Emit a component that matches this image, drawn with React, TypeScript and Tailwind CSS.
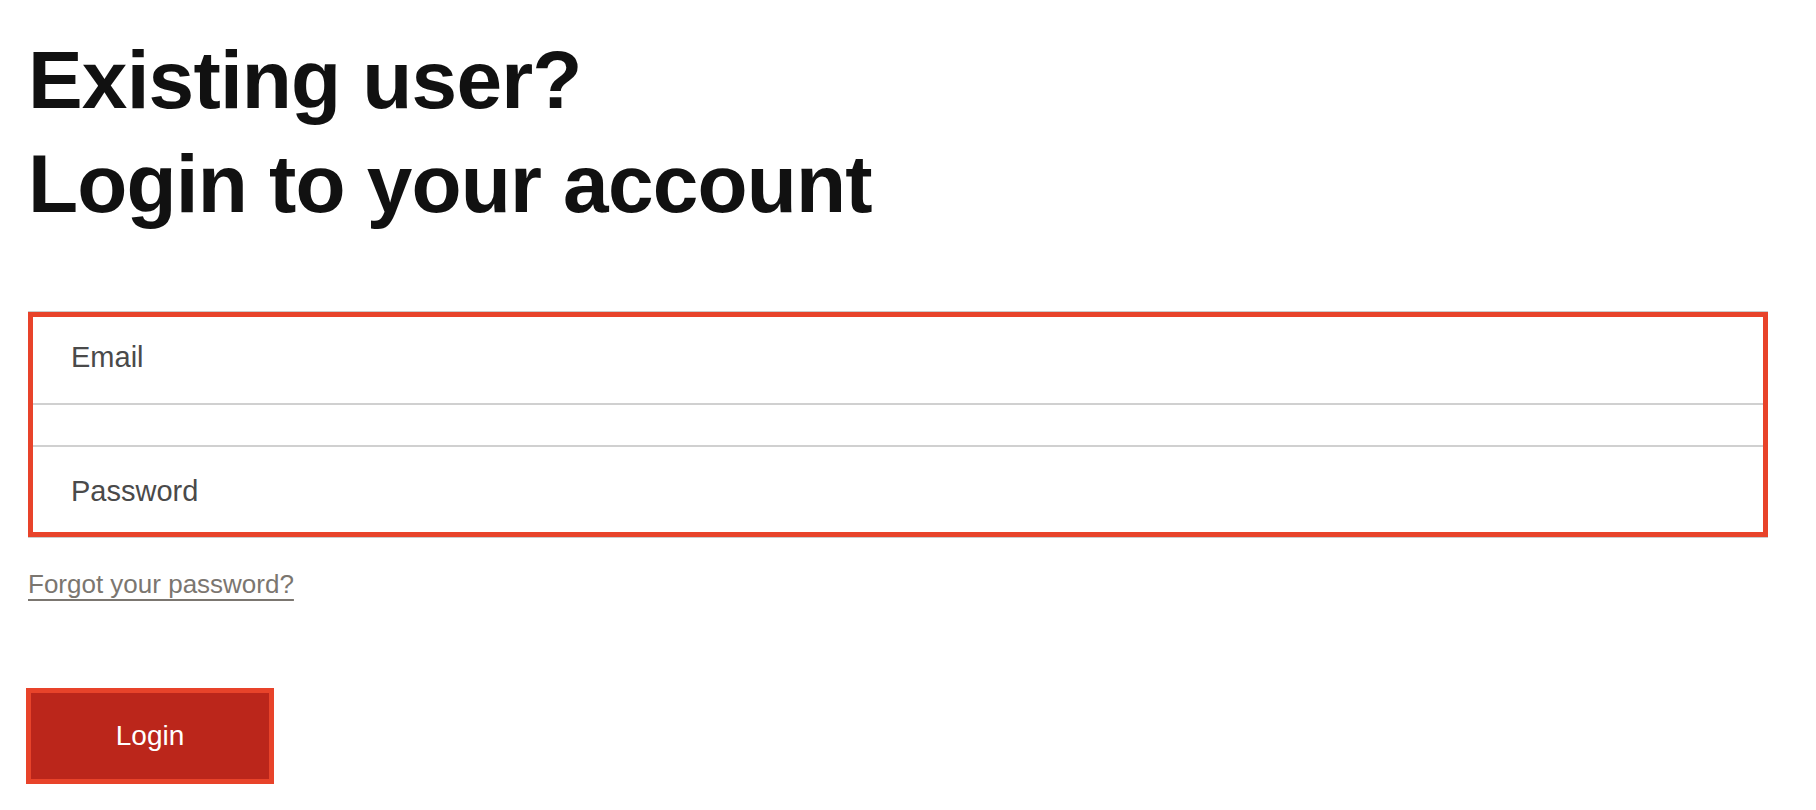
export default function App() {
  return (
    <div className="min-h-screen bg-white pl-[28px] pr-[48px] pt-[28px] font-['Liberation_Sans',Arial,sans-serif]">
      {/* Heading */}
      <h1 className="text-[82px] leading-[104px] font-bold tracking-[-0.01em] text-[#111111]">
        Existing user?
        <br />
        Login to your account
      </h1>

      {/* Fields */}
      <div className="mt-[76px] border-[5px] border-[#e8432a] shadow-[0_-1px_0_#cccccc,0_1px_0_#cccccc]">
        <div className="h-[86px] pl-[38px] pt-[20px]">
          <span className="text-[29px] leading-[40px] text-[#4a4a4a]">Email</span>
        </div>
        <div className="h-[2px] bg-[#d0d0d0]" />
        <div className="h-[40px]" />
        <div className="h-[2px] bg-[#d0d0d0]" />
        <div className="h-[85px] pl-[38px] pt-[24px]">
          <span className="text-[29px] leading-[40px] text-[#4a4a4a]">Password</span>
        </div>
      </div>

      {/* Forgot */}
      <div className="mt-[29px]">
        <a
          href="#"
          className="text-[26px] leading-[36px] text-[#7b7670] underline decoration-2 underline-offset-[6px]"
        >
          Forgot your password?
        </a>
      </div>

      {/* Button */}
      <button
        type="button"
        className="mt-[86px] -ml-[2px] flex h-[96px] w-[248px] items-center justify-center border-[5px] border-[#e8432a] bg-[#bb261b] text-[28px] text-white"
      >
        Login
      </button>
    </div>
  );
}
